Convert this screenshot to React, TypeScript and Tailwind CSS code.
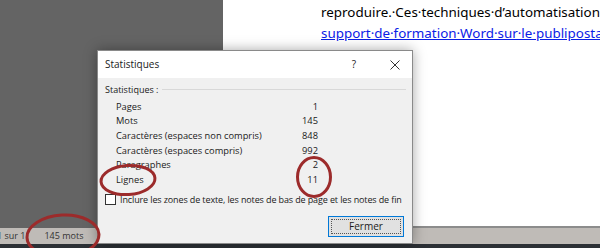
import React from 'react';

const rows = [
  { label: 'Pages', value: '1' },
  { label: 'Mots', value: '145' },
  { label: 'Caractères (espaces non compris)', value: '848' },
  { label: 'Caractères (espaces compris)', value: '992' },
  { label: 'Paragraphes', value: '2' },
  { label: 'Lignes', value: '11' },
];

const Ellipses = () => (
  <svg className="absolute inset-0 pointer-events-none" width="600" height="248" viewBox="0 0 600 248">
    <g fill="none" stroke="#9c2b2b" strokeWidth="3">
      <ellipse cx="128" cy="180" rx="27" ry="14.5" transform="rotate(-4 128 180)" />
      <ellipse cx="314" cy="177" rx="16.5" ry="19.5" />
      <ellipse cx="63" cy="236" rx="36" ry="21" transform="rotate(-3 63 236)" />
    </g>
  </svg>
);

const App: React.FC = () => {
  return (
    <div className="relative w-[600px] h-[248px] overflow-hidden flex flex-col bg-[#646464] font-['Open_Sans',sans-serif]">
      {/* zone document */}
      <div className="flex flex-1">
        <div className="w-[223px] bg-[#646464]" />
        <div className="flex-1 bg-white border-b-2 border-[#8c8c8c] pl-[98px] pt-[2px] text-[13.4px] leading-[21px] text-black whitespace-nowrap overflow-hidden font-['Noto_Sans',sans-serif]">
          <p>reproduire.·Ces·techniques·d’automatisation</p>
          <p className="text-[#0b20e6] underline">support·de·formation·Word·sur·le·publipostage</p>
        </div>
      </div>

      {/* barre d'état */}
      <div className="h-[16px] bg-[#bfbbb7] flex items-center text-[9px] text-[#333] whitespace-nowrap">
        <span className="ml-[-3px]">1 sur 1</span>
        <span className="ml-[19px]">145 mots</span>
      </div>
      <div className="h-[4px] bg-[#2c3035]" />

      {/* boîte de dialogue */}
      <div className="absolute left-[97px] top-[50px] w-[316px] h-[194px] flex flex-col border border-[#8a8a8a] bg-[#f0f0f0] shadow-[0_0_12px_rgba(0,0,0,0.35)] text-[9px] text-[#1a1a1a]">
        <div className="h-[27px] bg-white flex items-center pl-[7px] pr-[12px] text-[10px]">
          <span className="flex-1">Statistiques</span>
          <span className="w-[10px] text-center mr-[31px]">?</span>
          <svg width="10" height="10" viewBox="0 0 10 10">
            <path d="M0.5 0.5 L9.5 9.5 M9.5 0.5 L0.5 9.5" stroke="#333" strokeWidth="1" />
          </svg>
        </div>

        <div className="flex-1 flex flex-col px-[7px] pt-[5px]">
          <div className="flex items-center gap-[4px]">
            <span>Statistiques :</span>
            <div className="flex-1 h-[2px] border-t border-[#d8d8d8] border-b-white mr-[-1px]" />
          </div>

          <div className="mt-[3px] pl-[11px] w-[213px] flex flex-col text-[9.3px]">
            {rows.map((r) => (
              <div key={r.label} className="flex justify-between h-[14.6px] items-center">
                <span>{r.label}</span>
                <span>{r.value}</span>
              </div>
            ))}
          </div>

          <div className="mt-[6px] flex items-center gap-[4px] whitespace-nowrap tracking-[-0.12px]">
            <div className="w-[11px] h-[11px] border border-[#333] bg-white shrink-0" />
            <span>Inclure les zones de texte, les notes de bas de page et les notes de fin</span>
          </div>

          <div className="flex justify-end mt-[9px] mr-[1px]">
            <button className="w-[76px] h-[21px] border border-[#0078d7] bg-[#e1e1e1] p-[2px]">
              <div className="w-full h-full border border-dotted border-[#555] flex items-center justify-center text-[10px]">
                Fermer
              </div>
            </button>
          </div>
        </div>
      </div>

      <Ellipses />
    </div>
  );
};

export default App;
